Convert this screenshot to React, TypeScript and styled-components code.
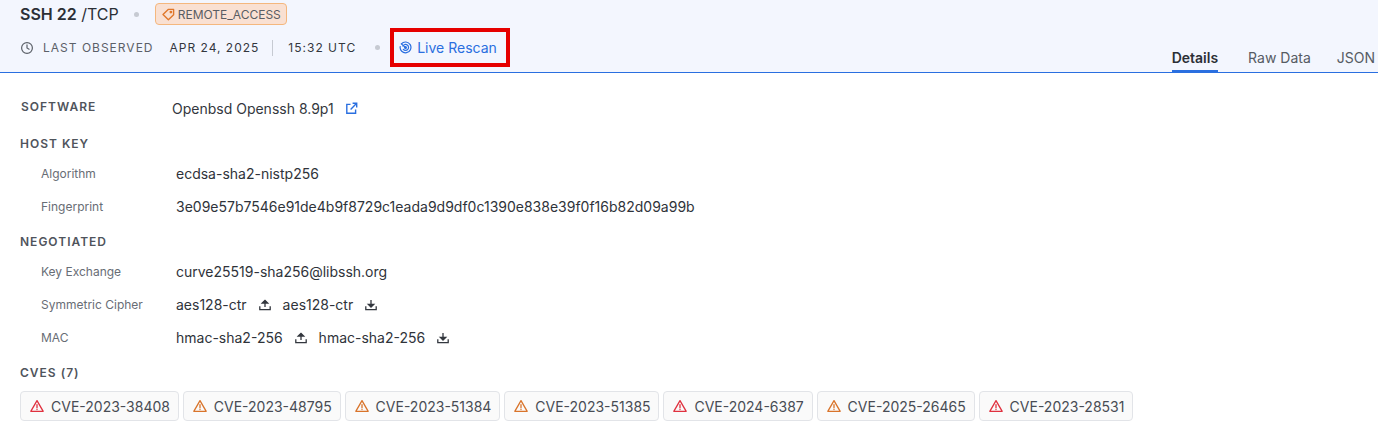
import React from "react";
import styled, { createGlobalStyle } from "styled-components";

const Global = createGlobalStyle`
  html, body { margin: 0; padding: 0; background: #fff; }
  body { font-family: Inter, "Liberation Sans", sans-serif; color: #2b2f36; }
  * { box-sizing: border-box; }
`;

const Page = styled.div`width: 1378px; height: 430px; overflow: hidden; background: #fff;`;

const Header = styled.header`
  height: 73px;
  background: #f3f6fe;
  border-bottom: 1px solid #2a6fe0;
  padding: 3px 3px 0 20px;
  display: flex;
  justify-content: space-between;
`;
const HeaderLeft = styled.div`display: flex; flex-direction: column;`;
const TitleRow = styled.div`display: flex; align-items: center; height: 22px;`;
const Title = styled.div`font-size: 16px; line-height: 22px; font-weight: 400; color: #2b2f36; white-space: nowrap; b { font-weight: 600; }`;
const Dot = styled.span<{ $l: number; $r: number }>`
  width: 5px; height: 5px; border-radius: 50%; background: #c6cad2; flex: none;
  margin: 0 ${p => p.$r}px 0 ${p => p.$l}px;
`;
const Tag = styled.div`
  display: flex; align-items: center; gap: 3px; height: 22px; width: 132px; padding-left: 6px;
  background: #f9e0d2; border: 1px solid #f4b77e; border-radius: 4px;
  font-size: 12px; color: #5a5d63; white-space: nowrap;
`;
const MetaRow = styled.div`display: flex; align-items: center; height: 39px; margin-top: 3px;`;
const MetaLabel = styled.span`font-size: 12px; letter-spacing: 1px; color: #5b6068; margin: 0 16px 0 9px; white-space: nowrap;`;
const MetaValue = styled.span`font-size: 12px; letter-spacing: 1px; color: #33373e; white-space: nowrap;`;
const Divider = styled.span`width: 1px; height: 16px; background: #c6cad2; margin: 0 15px 0 13px;`;
const Rescan = styled.a`
  display: flex; align-items: center; gap: 5px; width: 120px; height: 39px; padding-left: 5px;
  border: 4px solid #e60000; font-size: 14px; color: #2a6fe0; white-space: nowrap;
`;
const Tabs = styled.nav`display: flex; align-items: flex-end; height: 100%;`;
const Tab = styled.div<{ $active?: boolean; $gap?: number }>`
  height: 24px; font-size: 14px; line-height: 20px; white-space: nowrap;
  margin-right: ${p => p.$gap ?? 0}px;
  font-weight: ${p => (p.$active ? 600 : 400)};
  color: ${p => (p.$active ? "#2b2f36" : "#565b63")};
  border-bottom: ${p => (p.$active ? "2px solid #2a6fe0" : "2px solid transparent")};
`;

const Body = styled.main`padding: 25px 0 0 20px;`;
const SoftwareRow = styled.div`display: flex; align-items: center; height: 20px;`;
const SoftwareLabel = styled.div`width: 152px; padding-left: 1px; margin-bottom: 3px; font-size: 12px; font-weight: 600; letter-spacing: 1px; color: #4f545c;`;
const SoftwareValue = styled.div`font-size: 14px; color: #33373e; margin-right: 11px; white-space: nowrap;`;
const Section = styled.div<{ $top: number }>`
  margin-top: ${p => p.$top}px; margin-bottom: 5px; height: 16px; line-height: 16px;
  font-size: 12px; font-weight: 600; letter-spacing: 1px; color: #4f545c;
`;
const KV = styled.div`display: flex; align-items: center; height: 33px; padding-left: 21px;`;
const Key = styled.div`width: 135px; font-size: 12px; color: #686d75; white-space: nowrap;`;
const Val = styled.div`display: flex; align-items: center; font-size: 14px; color: #2f333a; white-space: nowrap;`;
const DirIcon = styled.svg<{ $gap: number }>`width: 14px; height: 14px; margin: 0 ${p => p.$gap}px 0 11px; flex: none; color: #33373e;`;
const Chips = styled.div`display: flex; gap: 4px; margin-top: 10px;`;
const Chip = styled.div`
  display: flex; align-items: center; gap: 7px; height: 30px; padding: 0 7.85px 0 9px;
  background: #fafafa; border: 1px solid #e2e4e8; border-radius: 4px;
  font-size: 14px; color: #484c54; white-space: nowrap;
`;
const Warn = styled.svg`width: 14px; height: 14px; flex: none;`;

const Clock = () => (
  <svg width="14" height="14" viewBox="0 0 14 14" fill="none" stroke="#5b6068" strokeWidth="1.2" strokeLinecap="round">
    <circle cx="7" cy="7" r="5.4" /><path d="M7 3.9V7l2.1 1.2" />
  </svg>
);
const TagIcon = () => (
  <svg width="13" height="13" viewBox="0 0 13 13" fill="none" stroke="#e0782c" strokeWidth="1.4" strokeLinejoin="round">
    <path d="M1 6.6 6.2 1.4h5.4v5.4l-5.2 5z" /><circle cx="8.9" cy="4.1" r=".7" />
  </svg>
);
const RescanIcon = () => (
  <svg width="13" height="13" viewBox="0 0 13 13" fill="none" stroke="#2a6fe0" strokeWidth="1.2" strokeLinecap="round">
    <path d="M2.4 2.9A5.4 5.4 0 1 1 1.2 5.5" /><path d="M3.9 5A3 3 0 1 1 4.3 8.4" /><path d="M6.5 6.5 2.4 2.9" /><circle cx="6.5" cy="6.5" r=".9" />
  </svg>
);
const External = () => (
  <svg width="13" height="13" viewBox="0 0 13 13" fill="none" stroke="#2a6fe0" strokeWidth="1.4">
    <path d="M5.5 2.4H1.8v8.8h8.8V7.5" /><path d="M5.6 7.4 11.2 1.8M7.6 1.3h4.1v4.1" />
  </svg>
);
const Upload = ({ gap = 0 }: { gap?: number }) => (
  <DirIcon $gap={gap} viewBox="0 0 14 14" fill="none" stroke="currentColor" strokeWidth="1.3">
    <path d="M1.8 8.2v3.4h10.4V8.2" /><path d="M7 9V3" /><path d="M4.3 5 7 2.4 9.7 5z" fill="currentColor" />
  </DirIcon>
);
const Download = ({ gap = 0 }: { gap?: number }) => (
  <DirIcon $gap={gap} viewBox="0 0 14 14" fill="none" stroke="currentColor" strokeWidth="1.3">
    <path d="M1.8 8.2v3.4h10.4V8.2" /><path d="M7 2v5" /><path d="M4.3 6.4 7 9l2.7-2.6z" fill="currentColor" />
  </DirIcon>
);
const WarnIcon = ({ color }: { color: string }) => (
  <Warn viewBox="0 0 14 14" fill="none" stroke={color} strokeWidth="1.3" strokeLinejoin="round" strokeLinecap="round">
    <path d="M7 1.6 13.2 12.3H.8z" /><path d="M7 5.6v3.2M7 10.3v.2" />
  </Warn>
);

const cves: [string, string][] = [
  ["CVE-2023-38408", "#e0313f"],
  ["CVE-2023-48795", "#d9742b"],
  ["CVE-2023-51384", "#d9742b"],
  ["CVE-2023-51385", "#d9742b"],
  ["CVE-2024-6387", "#e0313f"],
  ["CVE-2025-26465", "#d9742b"],
  ["CVE-2023-28531", "#e0313f"],
];

export default function App() {
  return (
    <Page>
      <Global />
      <Header>
        <HeaderLeft>
          <TitleRow>
            <Title><b>SSH 22</b> /TCP</Title>
            <Dot $l={15} $r={16} />
            <Tag><TagIcon />REMOTE_ACCESS</Tag>
          </TitleRow>
          <MetaRow>
            <Clock />
            <MetaLabel>LAST OBSERVED</MetaLabel>
            <MetaValue>APR 24, 2025</MetaValue>
            <Divider />
            <MetaValue>15:32 UTC</MetaValue>
            <Dot $l={19} $r={10} />
            <Rescan><RescanIcon />Live Rescan</Rescan>
          </MetaRow>
        </HeaderLeft>
        <Tabs>
          <Tab $active $gap={30}>Details</Tab>
          <Tab $gap={26}>Raw Data</Tab>
          <Tab>JSON</Tab>
        </Tabs>
      </Header>
      <Body>
        <SoftwareRow>
          <SoftwareLabel>SOFTWARE</SoftwareLabel>
          <SoftwareValue>Openbsd Openssh 8.9p1</SoftwareValue>
          <External />
        </SoftwareRow>
        <Section $top={18}>HOST KEY</Section>
        <KV><Key>Algorithm</Key><Val>ecdsa-sha2-nistp256</Val></KV>
        <KV><Key>Fingerprint</Key><Val>3e09e57b7546e91de4b9f8729c1eada9d9df0c1390e838e39f0f16b82d09a99b</Val></KV>
        <Section $top={11}>NEGOTIATED</Section>
        <KV><Key>Key Exchange</Key><Val>curve25519-sha256@libssh.org</Val></KV>
        <KV><Key>Symmetric Cipher</Key><Val>aes128-ctr<Upload gap={11} />aes128-ctr<Download /></Val></KV>
        <KV><Key>MAC</Key><Val>hmac-sha2-256<Upload gap={11} />hmac-sha2-256<Download /></Val></KV>
        <Section $top={11}>CVES (7)</Section>
        <Chips>
          {cves.map(([id, c]) => (
            <Chip key={id}><WarnIcon color={c} />{id}</Chip>
          ))}
        </Chips>
      </Body>
    </Page>
  );
}
